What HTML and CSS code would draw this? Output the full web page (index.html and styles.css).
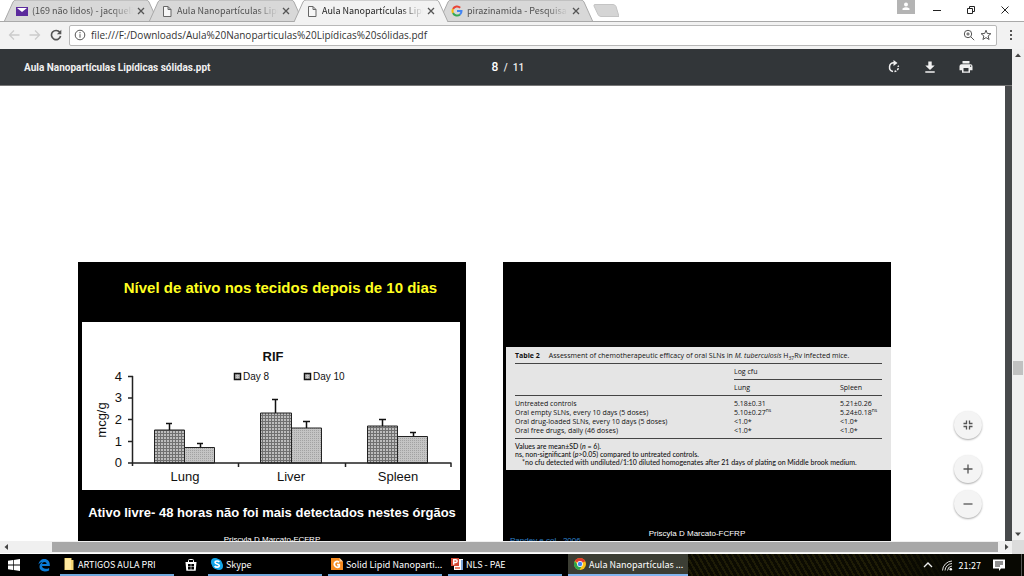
FILE: index.html
```html
<!DOCTYPE html>
<html lang="pt-BR">
<head>
<meta charset="utf-8">
<title>Aula Nanopartículas Lipídicas sólidas.ppt</title>
<link rel="stylesheet" href="styles.css">
</head>
<body>
<header class="tabstrip">
  <div class="tab tab-first">
    <svg class="tab-shape" viewBox="0 0 154 22" preserveAspectRatio="none"><path d="M0 22 9 2Q10 0 12 0H142Q144 0 145 2L154 22"/></svg>
    <svg class="fav" viewBox="0 0 12 12"><path fill="#5b2a9d" d="M0 2h12v9H0z"/><path fill="#fff" d="M1 3h10L6 7z"/></svg>
    <button class="tab-title">(169 não lidos) - jacqueli</button>
    <button class="tab-close" aria-label="Fechar"><svg viewBox="0 0 8 8"><path d="m1 1 6 6M7 1 1 7"/></svg></button>
  </div>
  <div class="tab">
    <svg class="tab-shape" viewBox="0 0 154 22" preserveAspectRatio="none"><path d="M0 22 9 2Q10 0 12 0H142Q144 0 145 2L154 22"/></svg>
    <svg class="fav doc" viewBox="0 0 12 12"><path d="M2.500 1.500h4.500l3 3v7H2.500zM7 1.500v3h3"/></svg>
    <button class="tab-title">Aula Nanopartículas Lipí</button>
    <button class="tab-close" aria-label="Fechar"><svg viewBox="0 0 8 8"><path d="m1 1 6 6M7 1 1 7"/></svg></button>
  </div>
  <div class="tab tab-active">
    <svg class="tab-shape" viewBox="0 0 154 22" preserveAspectRatio="none"><path d="M0 22 9 2Q10 0 12 0H142Q144 0 145 2L154 22"/></svg>
    <svg class="fav doc" viewBox="0 0 12 12"><path d="M2.500 1.500h4.500l3 3v7H2.500zM7 1.500v3h3"/></svg>
    <button class="tab-title">Aula Nanopartículas Lipí</button>
    <button class="tab-close" aria-label="Fechar"><svg viewBox="0 0 8 8"><path d="m1 1 6 6M7 1 1 7"/></svg></button>
  </div>
  <div class="tab">
    <svg class="tab-shape" viewBox="0 0 154 22" preserveAspectRatio="none"><path d="M0 22 9 2Q10 0 12 0H142Q144 0 145 2L154 22"/></svg>
    <svg class="fav" viewBox="0 0 12 12" fill="none" stroke-width="2"><path stroke="#ea4335" d="M2 4a4.500 4.500 0 0 1 7.200-1.300"/><path stroke="#fbbc05" d="M2 4a4.600 4.600 0 0 0 0 4"/><path stroke="#34a853" d="M2 8a4.500 4.500 0 0 0 7 1.500"/><path stroke="#4285f4" d="M9 9.500A4.500 4.500 0 0 0 10.500 6H6"/></svg>
    <button class="tab-title">pirazinamida - Pesquisa G</button>
    <button class="tab-close" aria-label="Fechar"><svg viewBox="0 0 8 8"><path d="m1 1 6 6M7 1 1 7"/></svg></button>
  </div>
  <button class="new-tab" aria-label="Nova guia"><svg viewBox="0 0 26 13"><path d="M2 .5h18q2 0 3 2l3 10H8q-2 0-3-2L1 2Q.5 .5 2 .5z"/></svg></button>
  <div class="window-controls">
    <button class="profile" aria-label="Perfil"><svg viewBox="0 0 18 14"><circle cx="9" cy="4.500" r="2"/><path d="M5.500 10V8.500Q9 6 12.500 8.500V10z"/></svg></button>
    <button class="win-btn" aria-label="Minimizar"><svg viewBox="0 0 10 10"><path d="M1 5.500h8"/></svg></button>
    <button class="win-btn" aria-label="Restaurar"><svg viewBox="0 0 10 10"><path d="M1.500 3.500h5v5h-5zM3.500 3V1.500h5v5H7"/></svg></button>
    <button class="win-btn" aria-label="Fechar janela"><svg viewBox="0 0 10 10"><path d="m1.500 1.500 7 7M8.500 1.500l-7 7"/></svg></button>
  </div>
</header>

<nav class="toolbar">
  <button class="nav-btn disabled" aria-label="Voltar"><svg viewBox="0 0 12 12"><path d="M11.500 6H1.500M6 1.500 1.500 6 6 10.500"/></svg></button>
  <button class="nav-btn disabled" aria-label="Avançar"><svg viewBox="0 0 12 12"><path d="M.5 6h10M6 1.500 10.500 6 6 10.500"/></svg></button>
  <button class="nav-btn reload" aria-label="Recarregar"><svg viewBox="0 0 12 12"><path d="M9.800 3.300A4.600 4.600 0 1 0 10.600 7"/><path class="solid" d="M11.300.8v4.400H6.900z"/></svg></button>
  <div class="omnibox">
    <svg class="info" viewBox="0 0 12 12"><circle cx="6" cy="6" r="4.800"/><path d="M6 5.200v3.500M6 3v1.300"/></svg>
    <input class="url" aria-label="Endereço" value="file:///F:/Downloads/Aula%20Nanoparticulas%20Lipídicas%20sólidas.pdf">
    <button class="omni-btn" aria-label="Zoom"><svg viewBox="0 0 12 12"><circle cx="5" cy="5" r="3.700"/><path d="m7.800 7.800 3.400 3.400M5 3.300v3.400M3.300 5h3.400"/></svg></button>
    <button class="omni-btn" aria-label="Favorito"><svg viewBox="0 0 12 12"><path d="m6 1.200 1.300 3.300 3.600.2-2.800 2.300 1 3.500L6 8.600l-3.100 1.900 1-3.500L1.100 4.700l3.600-.2z"/></svg></button>
  </div>
  <button class="menu-btn" aria-label="Menu"><svg viewBox="0 0 4 12"><path d="M1 1h2v2H1zM1 5h2v2H1zM1 9h2v2H1z"/></svg></button>
</nav>

<div class="content">
  <div class="main-col">
    <div class="pdf-bar">
      <h1 class="pdf-title">Aula Nanopartículas Lipídicas sólidas.ppt</h1>
      <div class="pager"><input class="page-no" aria-label="Página" value="8"><span>/</span><span>11</span></div>
      <div class="pdf-actions">
        <button aria-label="Girar"><svg viewBox="0 0 14 14"><path class="line" d="M7 2.800a4.400 4.400 0 0 0-1 8.700"/><path class="line" stroke-dasharray="2 1.200" d="M7.500 11.600a4.400 4.400 0 0 0 3.600-6"/><path d="m6.500 0 4 3-4 3z"/></svg></button>
        <button aria-label="Baixar"><svg viewBox="0 0 14 14"><path d="M5.300 1.500h3.400v4h3L7 10 2.300 5.500h3zM2.300 11.200h9.400v1.600H2.300z"/></svg></button>
        <button aria-label="Imprimir"><svg viewBox="0 0 14 14"><path d="M3.500 1h7v2.500h-7z"/><path fill-rule="evenodd" d="M2.500 4.200h9q2 0 2 2v4h-2.500V12.800H3V10.200H.5v-4q0-2 2-2zM4.500 8v3.500h5V8zM11 5.500v1.200h1.200V5.500z"/></svg></button>
      </div>
    </div>
    <main class="viewer">
      <div class="pages">
        <section class="slide slide-chart">
          <h2 class="slide-title">Nível de ativo nos tecidos depois de 10 dias</h2>
          <svg class="chart" viewBox="0 0 378 168" role="img" aria-label="RIF">
            <defs>
              <pattern id="dark" width="3" height="3" patternUnits="userSpaceOnUse"><path fill="#bdbdbd" d="M0 0h3v3H0z"/><path stroke="#707070" d="M0 .5h3M.5 0v3"/></pattern>
              <pattern id="light" width="2" height="2" patternUnits="userSpaceOnUse"><path fill="#c4c4c4" d="M0 0h2v2H0z"/><path fill="#a2a2a2" d="M0 0h1v1H0z"/></pattern>
            </defs>
            <text class="chart-title" x="191" y="39">RIF</text>
            <path class="swatch" fill="url(#light)" d="M152.500 51.500h6v6h-6z"/><text class="legend" x="161" y="58">Day 8</text>
            <path class="swatch" fill="url(#light)" d="M222.500 51.500h6v6h-6z"/><text class="legend" x="231" y="58">Day 10</text>
            <text class="axis-title" transform="translate(24 98) rotate(-90)">mcg/g</text>
            <g class="ticks"><text x="40" y="59">4</text><text x="40" y="80">3</text><text x="40" y="102">2</text><text x="40" y="124">1</text><text x="40" y="145">0</text></g>
            <g class="bars">
              <path fill="url(#dark)" d="M72.500 108h30v33h-30zM178.500 91h31v50h-31zM285.500 104h30v37h-30z"/>
              <path fill="url(#light)" d="M102.500 125.500h30V141h-30zM209.500 106h30v35h-30zM315.500 114.500h30V141h-30z"/>
            </g>
            <path class="error" d="M84 101.500h6M87.500 101v7M115 121.500h6M118.500 121v4M190 77.500h6M193.500 77v14M221 99.500h7M224.500 99v7M297 97.500h7M300.500 97v7M328 110.500h6M331.500 110v4"/>
            <path class="axis" d="M50.500 54v90M46 54.500h5M46 76h5M46 97.500h5M46 119.500h5M46 141h323.500M156.500 141v4M263.500 141v4M369 141v4"/>
            <g class="groups"><text x="103" y="159">Lung</text><text x="209" y="159">Liver</text><text x="316" y="159">Spleen</text></g>
          </svg>
          <p class="slide-note">Ativo livre- 48 horas não foi mais detectados nestes órgãos</p>
          <p class="credit">Priscyla D Marcato-FCFRP</p>
        </section>
        <section class="slide slide-table">
          <div class="paper">
            <table>
              <caption><b>Table 2</b>Assessment of chemotherapeutic efficacy of oral SLNs in <i>M. tuberculosis</i> H<sub>37</sub>Rv infected mice.</caption>
              <thead>
                <tr><th class="name-col"></th><th colspan="2" class="span-head">Log cfu</th></tr>
                <tr><th></th><th class="lung-col">Lung</th><th>Spleen</th></tr>
              </thead>
              <tbody>
                <tr><td>Untreated controls</td><td>5.18±0.31</td><td>5.21±0.26</td></tr>
                <tr><td>Oral empty SLNs, every 10 days (5 doses)</td><td>5.10±0.27<sup>ns</sup></td><td>5.24±0.18<sup>ns</sup></td></tr>
                <tr><td>Oral drug-loaded SLNs, every 10 days (5 doses)</td><td>&lt;1.0*</td><td>&lt;1.0*</td></tr>
                <tr><td>Oral free drugs, daily (46 doses)</td><td>&lt;1.0*</td><td>&lt;1.0*</td></tr>
              </tbody>
            </table>
            <div class="notes">
              <p>Values are mean±SD (<i>n</i> = 6).</p>
              <p>ns, non-significant (<i>p</i>&gt;0.05) compared to untreated controls.</p>
              <p class="indent">*no cfu detected with undiluted/1:10 diluted homogenates after 21 days of plating on Middle brook medium.</p>
            </div>
          </div>
          <p class="credit">Priscyla D Marcato-FCFRP</p>
          <p class="source">Pandey e col., 2006</p>
        </section>
      </div>
      <div class="zoom-controls">
        <button class="fit" aria-label="Ajustar à página"><svg viewBox="0 0 12 12"><path d="M1.500 4.500h3v-3M10.500 4.500h-3v-3M1.500 7.500h3v3M10.500 7.500h-3v3"/></svg></button>
        <button aria-label="Aumentar zoom"><svg viewBox="0 0 12 12"><path d="M6 1.500v9M1.500 6h9"/></svg></button>
        <button aria-label="Diminuir zoom"><svg viewBox="0 0 12 12"><path d="M1.500 6h9"/></svg></button>
      </div>
    </main>
    <div class="hscroll">
      <svg class="arrow" viewBox="0 0 12 12"><path d="M8 3v6L4.500 6z"/></svg>
      <div class="hthumb"></div>
      <svg class="arrow" viewBox="0 0 12 12"><path d="M5 3v6l3.500-3z"/></svg>
    </div>
  </div>
  <div class="vscroll">
    <svg class="arrow" viewBox="0 0 12 12"><path d="M3 8h6L6 4.500z"/></svg>
    <div class="vthumb"></div>
    <svg class="arrow" viewBox="0 0 12 12"><path d="M3 4.500h6L6 8z"/></svg>
    <div class="corner"></div>
  </div>
</div>

<footer class="taskbar">
  <button class="task-icon start" aria-label="Iniciar"><svg viewBox="0 0 14 14"><path fill="#fff" d="M1 2.800 6 2v4.600H1zM6.700 1.900 13 1v5.600H6.700zM1 7.400h5V12l-5-.8zM6.700 7.400H13V13l-6.300-.9z"/></svg></button>
  <button class="task-icon edge" aria-label="Edge"><svg viewBox="0 0 14 14"><path fill="#0a7bd8" d="M1.500 6.500C2 3 4.500 1 7.300 1c3.500 0 5.500 2.500 5.500 5.600v1.500H5c.2 1.900 1.800 2.700 3.600 2.700 1.300 0 2.500-.3 3.500-.9v2.500c-1.200.7-2.700 1-4.200 1C4.800 13.400 2.500 11.600 2.500 8.800 2.500 6.800 3.500 5 5.500 4 4 4.200 2.500 5 1.500 6.500zM5.100 6.100h4.500C9.600 4.700 8.800 4 7.500 4S5.300 4.800 5.100 6.100z"/></svg></button>
  <button class="task"><svg viewBox="0 0 14 14"><path fill="#f6d774" d="M2.500 1h7v2h2v10h-9z"/><path fill="#ffe9a0" d="M3 1.500h6v11H3z"/></svg><span>ARTIGOS AULA PRI</span></button>
  <button class="task-icon" aria-label="Loja"><svg viewBox="0 0 14 14"><path fill="none" stroke="#fff" d="M4.500 4.500v-2q0-1 1-1h3q1 0 1 1v2"/><path fill="#fff" d="m1.500 4 11 0-.8 8.800H2.300z"/><path fill="#000" d="M4 6h2.700v2.500H4zM7.300 6H10v2.500H7.300zM4 9.100h2.700v2.300H4zM7.300 9.100H10v2.300H7.300z"/></svg></button>
  <button class="task"><svg viewBox="0 0 14 14"><circle cx="5" cy="5" r="4" fill="#12a5e8"/><circle cx="9" cy="9" r="4" fill="#12a5e8"/><circle cx="7" cy="7" r="5.200" fill="#12a5e8"/><path fill="none" stroke="#fff" stroke-width="1.600" d="M9.300 5C8.500 3.500 5 3.700 5 5.300 5 7.300 9.300 6.500 9.300 8.600 9.300 10.600 5.500 10.500 4.700 9"/></svg><span>Skype</span></button>
  <button class="task"><svg viewBox="0 0 14 14"><path fill="#f58a1f" d="M1 1h8.500L13 4.500V13H1z"/><path fill="#ffd2a0" d="M9.500 1v3.500H13z"/><path fill="none" stroke="#fff" stroke-width="1.800" d="M9 5.300C7.300 3.700 4.300 4.500 4.300 7.300S7.500 11 9.200 9.700V7.600H7"/></svg><span>Solid Lipid Nanoparti...</span></button>
  <button class="task"><svg viewBox="0 0 14 14"><path fill="#fff" d="M4 2h9v11H4z"/><path fill="#7da7d9" d="M11 3h2v10h-2z"/><path fill="#d24a35" d="M1 1h8v8H1z"/><path fill="none" stroke="#fff" stroke-width="1.400" d="M3.700 7.800V2.700h2.100a1.300 1.300 0 0 1 0 2.800H3.700"/><path fill="#e8836a" d="M5 10h5v2H5z"/></svg><span>NLS - PAE</span></button>
  <button class="task task-active"><svg viewBox="0 0 14 14"><circle cx="7" cy="7" r="6" fill="#fbc116"/><path fill="#e33b2e" d="M7 7 1.800 4A6 6 0 0 1 12.200 4z"/><path fill="#e33b2e" d="M7 4h5.200L7 7z"/><path fill="#2ba24c" d="M1.800 4A6 6 0 0 0 6.500 13L9 8.500H5z"/><circle cx="7" cy="7" r="2.900" fill="#fff"/><circle cx="7" cy="7" r="2.200" fill="#4285f4"/></svg><span>Aula Nanopartículas ...</span></button>
  <div class="tray">
    <button aria-label="Ícones ocultos"><svg viewBox="0 0 14 14"><path fill="none" stroke="#eee" stroke-width="1.300" d="m3 9 4-4 4 4"/></svg></button>
    <button aria-label="Rede"><svg viewBox="0 0 14 14"><g fill="none" stroke="#ddd"><path d="M2.500 12.500A10 10 0 0 1 12 3M5 12.500A7.500 7.500 0 0 1 12 5.500M7.500 12.500A5 5 0 0 1 12 8"/></g><circle cx="10.800" cy="11.300" r="1.300" fill="#fff"/></svg></button>
    <time class="clock">21:27</time>
    <button class="action" aria-label="Notificações"><svg viewBox="0 0 14 14"><path fill="#fff" d="M1 1.500h12v9H9L7 13V10.500H1z"/><path stroke="#222" d="M3 4h8M3 6h8M3 8h5"/></svg></button>
    <div class="peek"></div>
  </div>
</footer>
</body>
</html>
```

FILE: styles.css
```css
* { box-sizing: border-box; }
body {
  margin: 0;
  height: 100vh;
  display: flex;
  flex-direction: column;
  overflow: hidden;
  background: #fff;
  font-family: "Open Sans", "Noto Sans", sans-serif;
}
button { margin: 0; padding: 0; border: 0; background: none; font: inherit; color: inherit; }
input { margin: 0; padding: 0; border: 0; background: none; outline: 0; }
h1, h2, p { margin: 0; }
svg { display: block; flex: none; }

/* Tab strip */
.tabstrip { flex: none; display: flex; height: 22px; border-bottom: 1px solid #a9a9a9; font-family: "Noto Sans CJK SC", "Open Sans", sans-serif; }
.tab {
  position: relative;
  flex: 0 1 154px;
  min-width: 0;
  height: 22px;
  margin-left: -9px;
  padding: 0 13px 0 12px;
  display: flex;
  align-items: center;
  color: #505050;
}
.tab-first { margin-left: 4px; }
.tab-shape { position: absolute; inset: 0; width: 100%; height: 100%; z-index: -1; }
.tab-shape path { fill: #d8d8d8; stroke: #a9a9a9; }
.tab-active { color: #222; z-index: 1; }
.tab-active .tab-shape path { fill: #f2f2f2; }
.fav { width: 12px; height: 12px; margin-right: 4px; }
.doc { fill: #f6f6f6; stroke: #666; }
.tab-title {
  flex: 1;
  min-width: 0;
  overflow: hidden;
  white-space: nowrap;
  text-align: left;
  font-size: 9px;
  line-height: 14px;
  mask-image: linear-gradient(to right, #000 78%, transparent);
}
.tab-close { margin: 0 0 0 4px; }
.tab-close svg { width: 8px; height: 8px; fill: none; stroke: #555; stroke-width: 1.300; }
.new-tab { padding-bottom: 1px; }
.new-tab svg { width: 26px; height: 13px; fill: #d5d5d5; stroke: #c4c4c4; }
.window-controls { margin-left: auto; padding-right: 2px; display: flex; }
.profile { width: 18px; height: 14px; margin-right: 5px; background: #b4b4b4; }
.profile svg { width: 18px; height: 14px; fill: #fff; }
.win-btn { width: 34px; height: 20px; display: grid; place-items: center; }
.win-btn svg { width: 10px; height: 10px; fill: none; stroke: #222; }

/* Address bar */
.toolbar { flex: none; display: flex; align-items: center; height: 27px; padding: 0 11px 1px 8px; background: #f2f2f2; }
.nav-btn { margin-right: 9px; }
.nav-btn svg { width: 12px; height: 12px; fill: none; stroke: #555; stroke-width: 1.600; }
.nav-btn .solid { fill: #555; stroke: none; }
.disabled svg { stroke: #ccc; stroke-width: 1.300; }
.reload { margin-right: 7px; }
.omnibox {
  flex: 1;
  display: flex;
  align-items: center;
  gap: 5px;
  height: 21px;
  padding: 0 4px;
  border: 1px solid #b8b8b8;
  border-radius: 2px;
  background: #fff;
}
.info, .omni-btn svg { width: 12px; height: 12px; fill: none; stroke: #555; }
.url { flex: 1; min-width: 0; font-family: "Open Sans", "Noto Sans", sans-serif; font-size: 10px; color: #333; }
.menu-btn { margin-left: 12px; }
.menu-btn svg { width: 4px; height: 12px; fill: #555; }

/* Content area */
.content { flex: 1; min-height: 0; display: flex; }
.main-col { flex: 1; min-width: 0; display: flex; flex-direction: column; }
.pdf-bar {
  flex: none;
  display: grid;
  grid-template-columns: 1fr auto 1fr;
  align-items: center;
  height: 37px;
  padding: 0 39px 0 24px;
  background: #323639;
  border-bottom: 1px solid #777;
  color: #f1f1f1;
  font-family: Roboto, "Open Sans", sans-serif;
}
.pdf-title { font-size: 10px; font-weight: 700; white-space: nowrap; }
.pager { display: flex; align-items: center; gap: 5px; margin-left: 18px; font-size: 10px; font-weight: 500; }
.page-no { width: 8px; font: 500 12px Roboto, sans-serif; color: #fff; text-align: center; }
.pdf-actions { display: flex; justify-content: flex-end; gap: 22px; }
.pdf-actions svg { width: 14px; height: 14px; fill: #f1f1f1; }
.pdf-actions .line { fill: none; stroke: #f1f1f1; stroke-width: 1.500; }
.viewer { position: relative; flex: 1; min-height: 0; overflow: hidden; border-right: 7px solid #47494b; background: #fff; }
.pages { display: flex; gap: 37px; padding: 176px 78px 0; }
.slide { flex: none; width: 388px; height: 291px; background: #000; color: #fff; font-family: "Liberation Sans", Arial, sans-serif; }
.slide-title { padding: 16px 0 0 17px; text-align: center; font-size: 15px; line-height: 20px; color: #ffff20; }
.chart { width: 378px; height: 168px; margin: 24px 0 0 4px; background: #fff; fill: #111; }
.chart-title { font-size: 13px; font-weight: 700; text-anchor: middle; }
.legend { font-size: 10px; }
.swatch { stroke: #111; stroke-width: 1.500; }
.axis-title { font-size: 13px; text-anchor: middle; }
.ticks { font-size: 13px; text-anchor: end; }
.groups { font-size: 13px; text-anchor: middle; }
.bars { stroke: #222; }
.error { stroke: #111; stroke-width: 1.500; }
.axis { fill: none; stroke: #222; stroke-width: 1.500; }
.slide-note { margin-top: 13px; text-align: center; font-size: 13px; font-weight: 700; line-height: 20px; white-space: nowrap; }
.credit { text-align: center; font-size: 8px; line-height: 10px; }
.slide-chart .credit { margin-top: 12px; }

/* Table slide */
.slide-table { padding-top: 85px; }
.paper {
  margin-left: 3px;
  height: 123px;
  padding: 4px 9px 0;
  background: #e5e5e5;
  color: #111;
  font-family: "Open Sans", "Noto Sans", sans-serif;
  font-size: 7px;
  font-weight: 500;
  line-height: 9px;
}
.paper table { width: 100%; border-collapse: collapse; border-bottom: 1px solid #444; }
.paper caption { padding-bottom: 3px; text-align: left; white-space: nowrap; }
.paper caption b { margin-right: 9px; }
.paper th, .paper td { padding: 0; text-align: left; font-weight: inherit; white-space: nowrap; height: 9px; }
.paper thead th { height: 16px; }
.paper thead tr:first-child th { border-top: 1px solid #444; }
.paper .span-head { border-bottom: 1px solid #444; }
.paper thead tr:last-child th { border-bottom: 1px solid #444; }
.name-col { width: 219px; }
.lung-col { width: 106px; }
.paper tbody tr:first-child td { padding-top: 3px; }
.paper tbody tr:last-child td { padding-bottom: 3px; }
.paper sub, .paper sup { font-size: 5px; line-height: 1px; }
.notes { padding-top: 3px; line-height: 8px; font-family: Lato, "Open Sans", sans-serif; }
.indent { padding-left: 7px; }
.slide-table .credit { margin-top: 59px; }
.source { padding-left: 7px; margin-top: -3px; font-size: 8px; line-height: 10px; color: #2f83cc; }

/* Floating zoom buttons */
.zoom-controls { position: absolute; right: 23px; bottom: 23px; display: flex; flex-direction: column; gap: 7px; }
.zoom-controls button { width: 28px; height: 28px; border-radius: 50%; display: grid; place-items: center; background: #f4f4f4; box-shadow: 0 1px 2px #0005; }
.zoom-controls .fit { margin-bottom: 9px; }
.zoom-controls svg { width: 12px; height: 12px; fill: none; stroke: #555; stroke-width: 1.300; }

/* Scrollbars */
.arrow { width: 12px; height: 12px; fill: #444; }
.hscroll { flex: none; display: flex; align-items: center; height: 13px; background: #f0f0f0; border-bottom: 1px solid #fff; }
.hthumb { flex: 1; height: 10px; margin: 0 2px 0 40px; background: #a8a8a8; }
.vscroll { flex: none; width: 12px; display: flex; flex-direction: column; align-items: center; background: #f0f0f0; }
.vthumb { width: 10px; height: 14px; margin: 300px 0 auto; background: #c1c1c1; }
.corner { width: 12px; height: 14px; background: #dcdcdc; }

/* Taskbar */
.taskbar { flex: none; display: flex; height: 22px; background: #000; color: #fff; font-family: "Noto Sans CJK SC", "Open Sans", sans-serif; font-size: 9px; }
.task-icon { display: grid; place-items: center; width: 34px; }
.task-icon svg, .task svg, .tray svg { width: 14px; height: 14px; }
.start { width: 27px; }
.edge { width: 33px; }
.task {
  flex: 0 1 114px;
  min-width: 0;
  display: flex;
  align-items: center;
  gap: 2px;
  padding-left: 2px;
  border-bottom: 2px solid #6fa8dc;
  white-space: nowrap;
}
.task + .task { margin-left: 6px; }
.task-active { flex-basis: 120px; padding-left: 5px; background: #3c3e34; border-color: #83b5ee; }
.tray {
  flex: 1;
  display: flex;
  align-items: center;
  justify-content: flex-end;
  gap: 5px;
  background: linear-gradient(to right, transparent 60%, #080802 80%), repeating-linear-gradient(60deg, #0c0b02 0 3px, #1e1c06 3px 5px);
}
.clock { font-size: 9px; }
.action { margin-left: 6px; }
.peek { width: 3px; height: 22px; margin-left: 10px; border-left: 1px solid #555; }
```
